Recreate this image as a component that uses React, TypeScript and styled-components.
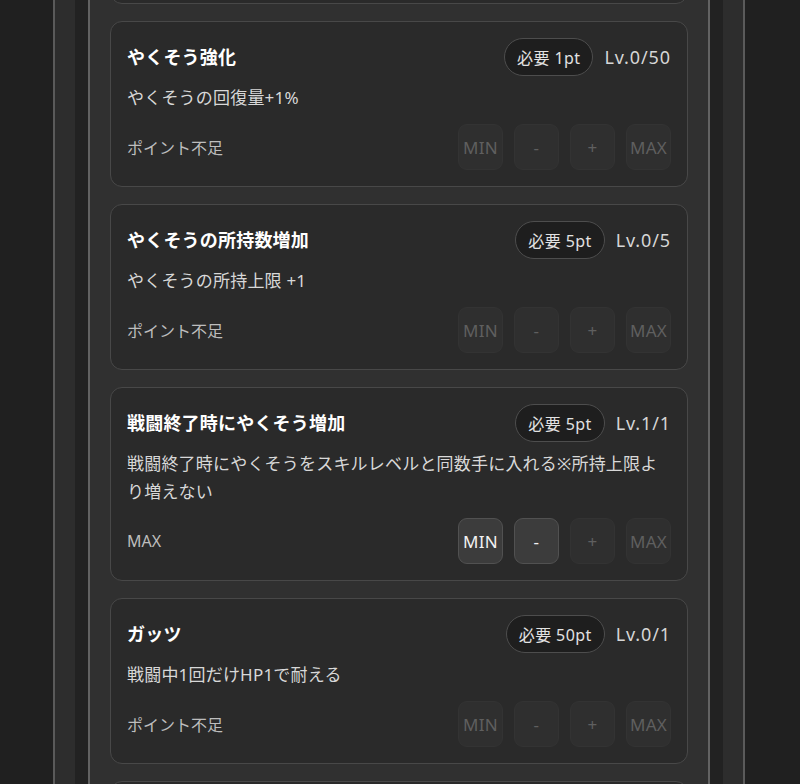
import React from 'react';
import styled, { createGlobalStyle } from 'styled-components';

const GlobalStyle = createGlobalStyle`
  html, body {
    margin: 0;
    padding: 0;
    background: #202020;
  }
  body {
    font-family: "Noto Sans", "Noto Sans CJK JP", sans-serif;
    overflow: hidden;
  }
  * { box-sizing: border-box; }
`;

const Page = styled.div`
  display: flex;
  height: 784px;
  overflow: hidden;
  padding-left: 53px;
  background: #202020;
`;

const Frame = styled.div`
  display: flex;
  flex-direction: column;
  width: 692px;
  border-left: 2px solid #5a5a5a;
  border-right: 2px solid #5a5a5a;
  background: #2d2d2d;
  padding: 0 20px;
`;

const Track = styled.div`
  display: flex;
  flex-direction: column;
  background: #222222;
  padding: 0 13px;
`;

const Panel = styled.div`
  display: flex;
  flex-direction: column;
  gap: 17px;
  margin-top: -162px;
  border-left: 2px solid #626262;
  border-right: 2px solid #626262;
  background: #303030;
  padding: 0 20px 40px;
`;

const Card = styled.section`
  display: flex;
  flex-direction: column;
  background: #2a2a2a;
  border: 1px solid #484848;
  border-radius: 12px;
  padding: 16px;
`;

const Header = styled.div`
  display: flex;
  align-items: center;
  justify-content: space-between;
  height: 38px;
  margin-bottom: 8px;
`;

const Title = styled.h3`
  margin: 0 0 2px;
  font-size: 18px;
  font-weight: 700;
  letter-spacing: 0.2px;
  color: #ffffff;
`;

const Meta = styled.div`
  display: flex;
  align-items: center;
  gap: 11px;
`;

const CostPill = styled.span`
  display: inline-flex;
  align-items: center;
  height: 38px;
  padding: 0 12px;
  border: 1px solid #4d4d4d;
  border-radius: 999px;
  background: #1e1e1e;
  color: #e2e2e2;
  font-size: 16px;
  letter-spacing: 0.4px;
  white-space: pre;
`;

const Level = styled.span`
  font-size: 18px;
  letter-spacing: 0.9px;
  color: #d6d6d6;
`;

const Desc = styled.p`
  margin: 0 0 12px;
  font-size: 17px;
  letter-spacing: 0.2px;
  line-height: 28px;
  color: #d8d8d8;
`;

const Footer = styled.div`
  display: flex;
  align-items: center;
  justify-content: space-between;
  height: 46px;
`;

const Status = styled.span`
  font-size: 16px;
  color: #bdbdbd;
`;

const Controls = styled.div`
  display: flex;
  gap: 11px;
`;

const StepButton = styled.button<{ $enabled: boolean }>`
  width: 45px;
  height: 46px;
  padding: 0;
  border-radius: 9px;
  border: 1px solid ${(p) => (p.$enabled ? '#515151' : '#333333')};
  background: ${(p) => (p.$enabled ? '#3c3c3c' : '#2f2f2f')};
  color: ${(p) => (p.$enabled ? '#f2f2f2' : '#5f5f5f')};
  font-family: "Noto Sans", "Noto Sans CJK JP", sans-serif;
  font-size: 17px;
  letter-spacing: 0.3px;
  cursor: ${(p) => (p.$enabled ? 'pointer' : 'default')};
`;

type Skill = {
  title: string;
  cost: number;
  lv: number;
  max: number;
  desc: string;
};

const skills: Skill[] = [
  { title: 'やくそう購入割引', cost: 1, lv: 0, max: 10, desc: 'やくそうの購入価格-1%' },
  { title: 'やくそう強化', cost: 1, lv: 0, max: 50, desc: 'やくそうの回復量+1%' },
  { title: 'やくそうの所持数増加', cost: 5, lv: 0, max: 5, desc: 'やくそうの所持上限 +1' },
  {
    title: '戦闘終了時にやくそう増加',
    cost: 5,
    lv: 1,
    max: 1,
    desc: '戦闘終了時にやくそうをスキルレベルと同数手に入れる※所持上限より増えない',
  },
  { title: 'ガッツ', cost: 50, lv: 0, max: 1, desc: '戦闘中1回だけHP1で耐える' },
  { title: '会心率アップ', cost: 10, lv: 0, max: 10, desc: '会心率+1%' },
];

const points = 0;

function SkillCard({ skill }: { skill: Skill }) {
  const isMax = skill.lv >= skill.max;
  const canDown = skill.lv > 0;
  const canUp = !isMax && points >= skill.cost;
  const status = isMax ? 'MAX' : canUp ? '' : 'ポイント不足';
  return (
    <Card>
      <Header>
        <Title>{skill.title}</Title>
        <Meta>
          <CostPill>{`必要 ${skill.cost}pt`}</CostPill>
          <Level>{`Lv.${skill.lv}/${skill.max}`}</Level>
        </Meta>
      </Header>
      <Desc>{skill.desc}</Desc>
      <Footer>
        <Status>{status}</Status>
        <Controls>
          <StepButton $enabled={canDown}>MIN</StepButton>
          <StepButton $enabled={canDown}>-</StepButton>
          <StepButton $enabled={canUp}>+</StepButton>
          <StepButton $enabled={canUp}>MAX</StepButton>
        </Controls>
      </Footer>
    </Card>
  );
}

export default function App() {
  return (
    <>
      <GlobalStyle />
      <Page>
        <Frame>
          <Track>
            <Panel>
              {skills.map((s) => (
                <SkillCard key={s.title} skill={s} />
              ))}
            </Panel>
          </Track>
        </Frame>
      </Page>
    </>
  );
}
